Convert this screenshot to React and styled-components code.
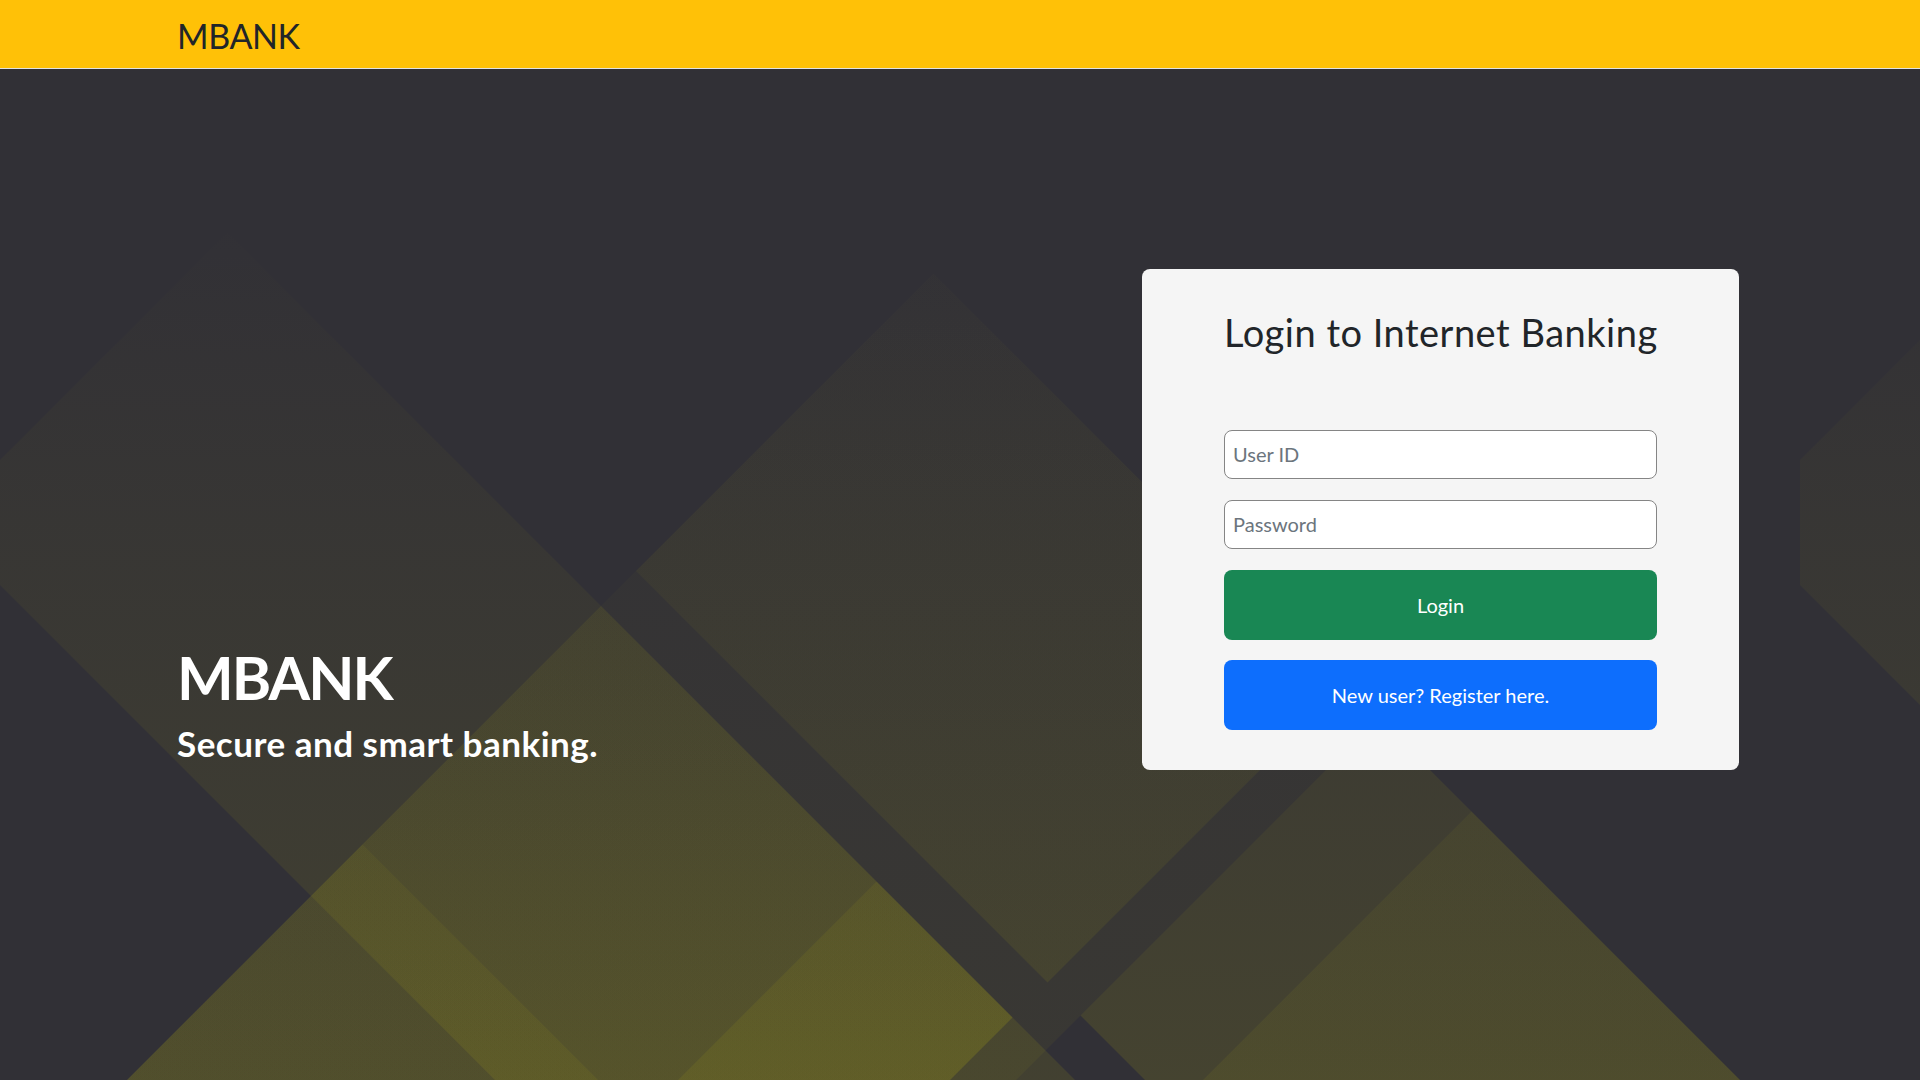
import React from 'react';
import styled, { createGlobalStyle } from 'styled-components';

const GlobalStyle = createGlobalStyle`
  * {
    box-sizing: border-box;
  }
  body {
    margin: 0;
    font-family: 'Lato', 'Open Sans', sans-serif;
    color: #212529;
    background: #313036;
  }
`;

// background artwork: rotated rectangles given in (u = x + y, v = x - y) space
const TILE = 1800;
const cells = [
  { u: [460, 4000], v: [-585, -5], w: 0.12 },
  { u: [1207, 2096], v: [-4000, 660], w: 0.06 },
  { u: [1207, 2030], v: [-4000, -5], w: 0.11 },
  { u: [1207, 2030], v: [-4000, -482], w: 0.08 },
  { u: [1758, 2030], v: [-482, -5], w: 0.1 },
  { u: [1207, 2030], v: [65, 660], w: 0.11 },
  { u: [2096, 4000], v: [65, 660], w: 0.14 },
  { u: [2283, 4000], v: [-200, 660], w: 0.08 },
];

const toPoints = ({ u, v }) =>
  [
    [u[0], v[0]],
    [u[0], v[1]],
    [u[1], v[1]],
    [u[1], v[0]],
  ]
    .map(([a, b]) => `${(a + b) / 2},${(a - b) / 2}`)
    .join(' ');

const Shapes = () =>
  cells.map((cell, i) => (
    <polygon key={i} points={toPoints(cell)} fill="url(#glow)" fillOpacity={cell.w} />
  ));

const Backdrop = () => (
  <BackdropSvg viewBox="0 69 1920 1011" preserveAspectRatio="none" aria-hidden="true">
    <defs>
      <linearGradient id="glow" gradientUnits="userSpaceOnUse" x1="0" y1="200" x2="0" y2="1080">
        <stop offset="0" stopColor="#bdb70c" stopOpacity="0" />
        <stop offset="1" stopColor="#bdb70c" stopOpacity="1" />
      </linearGradient>
      <clipPath id="tile">
        <rect x="0" y="0" width={TILE} height="1200" />
      </clipPath>
    </defs>
    <g clipPath="url(#tile)">
      <Shapes />
    </g>
    <g transform={`translate(${TILE} 0)`}>
      <g clipPath="url(#tile)">
        <Shapes />
      </g>
    </g>
  </BackdropSvg>
);

const App = () => {
  return (
    <Page>
      <GlobalStyle />
      <Header>
        <Brand>MBANK</Brand>
      </Header>
      <Hero>
        <Backdrop />
        <HeroInner>
          <Intro>
            <HeroTitle>MBANK</HeroTitle>
            <Tagline>Secure and smart banking.</Tagline>
          </Intro>
          <LoginCard>
            <CardTitle>Login to Internet Banking</CardTitle>
            <Form onSubmit={(e) => e.preventDefault()}>
              <Input type="text" placeholder="User ID" />
              <Input type="password" placeholder="Password" />
              <Button type="submit" $variant="success">Login</Button>
              <Button type="button" $variant="primary">New user? Register here.</Button>
            </Form>
          </LoginCard>
        </HeroInner>
      </Hero>
    </Page>
  );
};

const Page = styled.div`
  min-height: 100vh;
  display: flex;
  flex-direction: column;
`;

const Header = styled.header`
  height: 69px;
  padding: 4px 0 0 177px;
  display: flex;
  align-items: center;
  background-color: #ffc107;
  border-bottom: 1px solid #e2e2e2;
`;

const Brand = styled.span`
  font-size: 34px;
  line-height: 1.2;
  font-weight: 400;
  letter-spacing: -0.4px;
  color: #212529;
`;

const Hero = styled.main`
  flex: 1;
  position: relative;
  overflow: hidden;
  background-color: #313036;
`;

const BackdropSvg = styled.svg`
  position: absolute;
  inset: 0;
  width: 100%;
  height: 100%;
  display: block;
`;

const HeroInner = styled.div`
  position: relative;
  display: flex;
  justify-content: space-between;
  align-items: flex-start;
  padding: 200px 181px 0 177px;
`;

const Intro = styled.div`
  margin-top: 372px;
  color: #fff;
`;

const HeroTitle = styled.h1`
  margin: 0;
  font-size: 60px;
  line-height: 1.2;
  font-weight: 700;
  letter-spacing: -2px;
`;

const Tagline = styled.h2`
  margin: 9px 0 0;
  font-size: 35px;
  line-height: 1.2;
  font-weight: 700;
  letter-spacing: 0.5px;
`;

const LoginCard = styled.section`
  width: 597px;
  padding: 41px 82px 40px;
  background-color: #f5f5f5;
  border-radius: 8px;
`;

const CardTitle = styled.h2`
  margin: 0;
  font-size: 38px;
  line-height: 1.2;
  font-weight: 400;
  letter-spacing: 0.5px;
  text-align: center;
  color: #212529;
  white-space: nowrap;
`;

const Form = styled.form`
  margin-top: 74px;
  display: flex;
  flex-direction: column;
  gap: 21px;
`;

const Input = styled.input`
  height: 49px;
  width: 100%;
  padding: 0 8px;
  font-family: inherit;
  font-size: 20px;
  color: #212529;
  background: #fff;
  border: 1px solid #858585;
  border-radius: 8px;
  outline: none;

  &::placeholder {
    color: #6c757d;
  }
`;

const Button = styled.button`
  height: 70px;
  width: 100%;
  border: 0;
  border-radius: 8px;
  font-family: inherit;
  font-size: 20px;
  color: #fff;
  cursor: pointer;
  background-color: ${({ $variant }) => ($variant === 'success' ? '#198754' : '#0d6efd')};

  & + & {
    margin-top: -1px;
  }
`;

export default App;
